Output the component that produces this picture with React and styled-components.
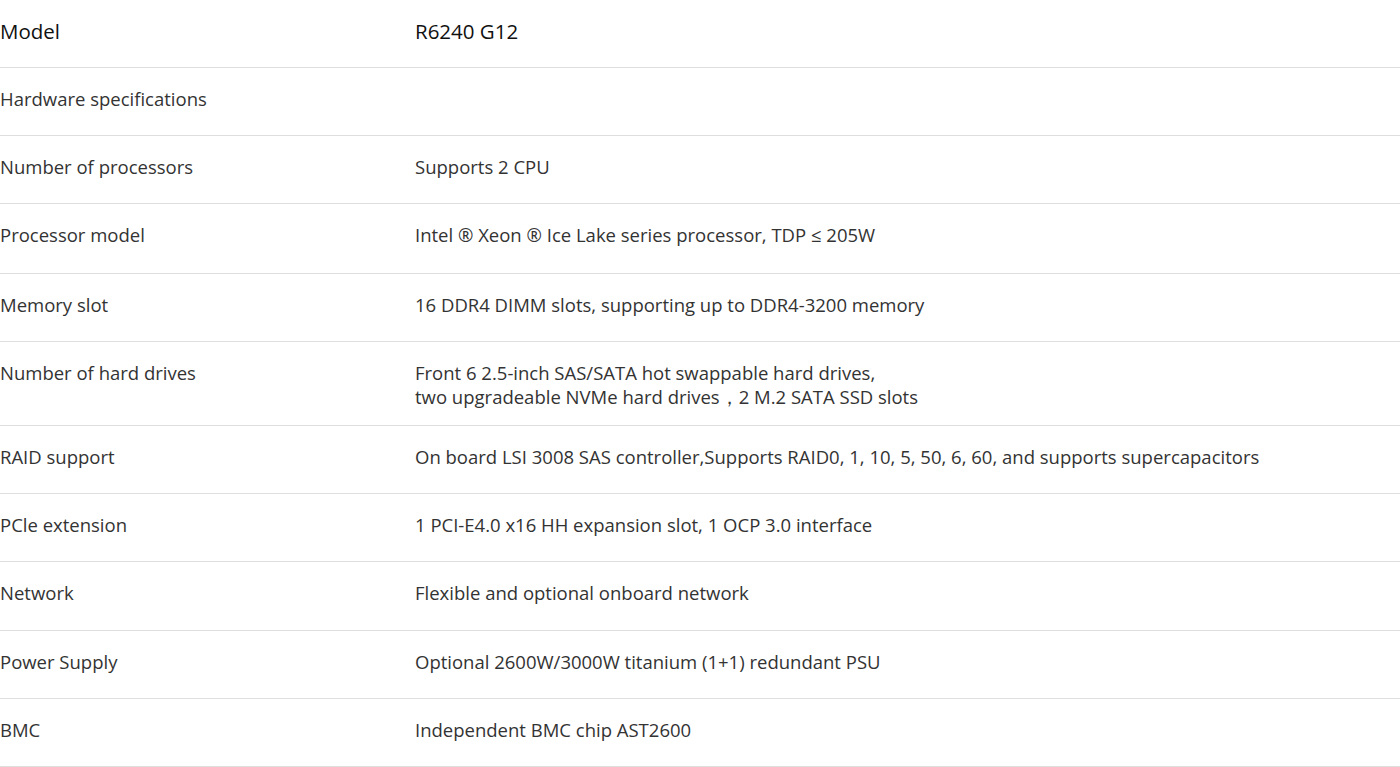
import React from "react"
import styled, {createGlobalStyle} from "styled-components"

const Global = createGlobalStyle`
  body {
    margin: 0;
    background: #fff;
    font-family: "Open Sans", "Noto Sans", Arial, sans-serif;
  }
`

const Table = styled.div`
  width: 1400px;
  display: flex;
  flex-direction: column;
`

const Row = styled.div`
  display: grid;
  grid-template-columns: 415px 1fr;
  align-items: start;
  box-sizing: border-box;
  min-height: ${props => props.h || 68}px;
  padding: 19px 0 16px;
  border-bottom: 1px solid #dedede;
  color: ${props => props.head ? "#111" : "#333"};
  font-size: ${props => props.head ? "20.5px" : "18.5px"};
  line-height: 24px;
`

const Cell = styled.div`
  white-space: pre-line;
`

const rows = [
  ["Hardware specifications", ""],
  ["Number of processors", "Supports 2 CPU"],
  ["Processor model", "Intel ® Xeon ® Ice Lake series processor, TDP ≤ 205W", 70],
  ["Memory slot", "16 DDR4 DIMM slots, supporting up to DDR4-3200 memory"],
  ["Number of hard drives", "Front 6 2.5-inch SAS/SATA hot swappable hard drives,\ntwo upgradeable NVMe hard drives，2 M.2 SATA SSD slots"],
  ["RAID support", "On board LSI 3008 SAS controller,Supports RAID0, 1, 10, 5, 50, 6, 60, and supports supercapacitors"],
  ["PCle extension", "1 PCI-E4.0 x16 HH expansion slot, 1 OCP 3.0 interface"],
  ["Network", "Flexible and optional onboard network", 69],
  ["Power Supply", "Optional 2600W/3000W titanium (1+1) redundant PSU"],
  ["BMC", "Independent BMC chip AST2600"],
]

export default function App() {
  return (
    <>
      <Global />
      <Table>
        <Row head>
          <Cell>Model</Cell>
          <Cell>R6240 G12</Cell>
        </Row>
        {rows.map(([label, value, h], i) => (
          <Row key={i} h={h}>
            <Cell>{label}</Cell>
            <Cell>{value}</Cell>
          </Row>
        ))}
      </Table>
    </>
  )
}
